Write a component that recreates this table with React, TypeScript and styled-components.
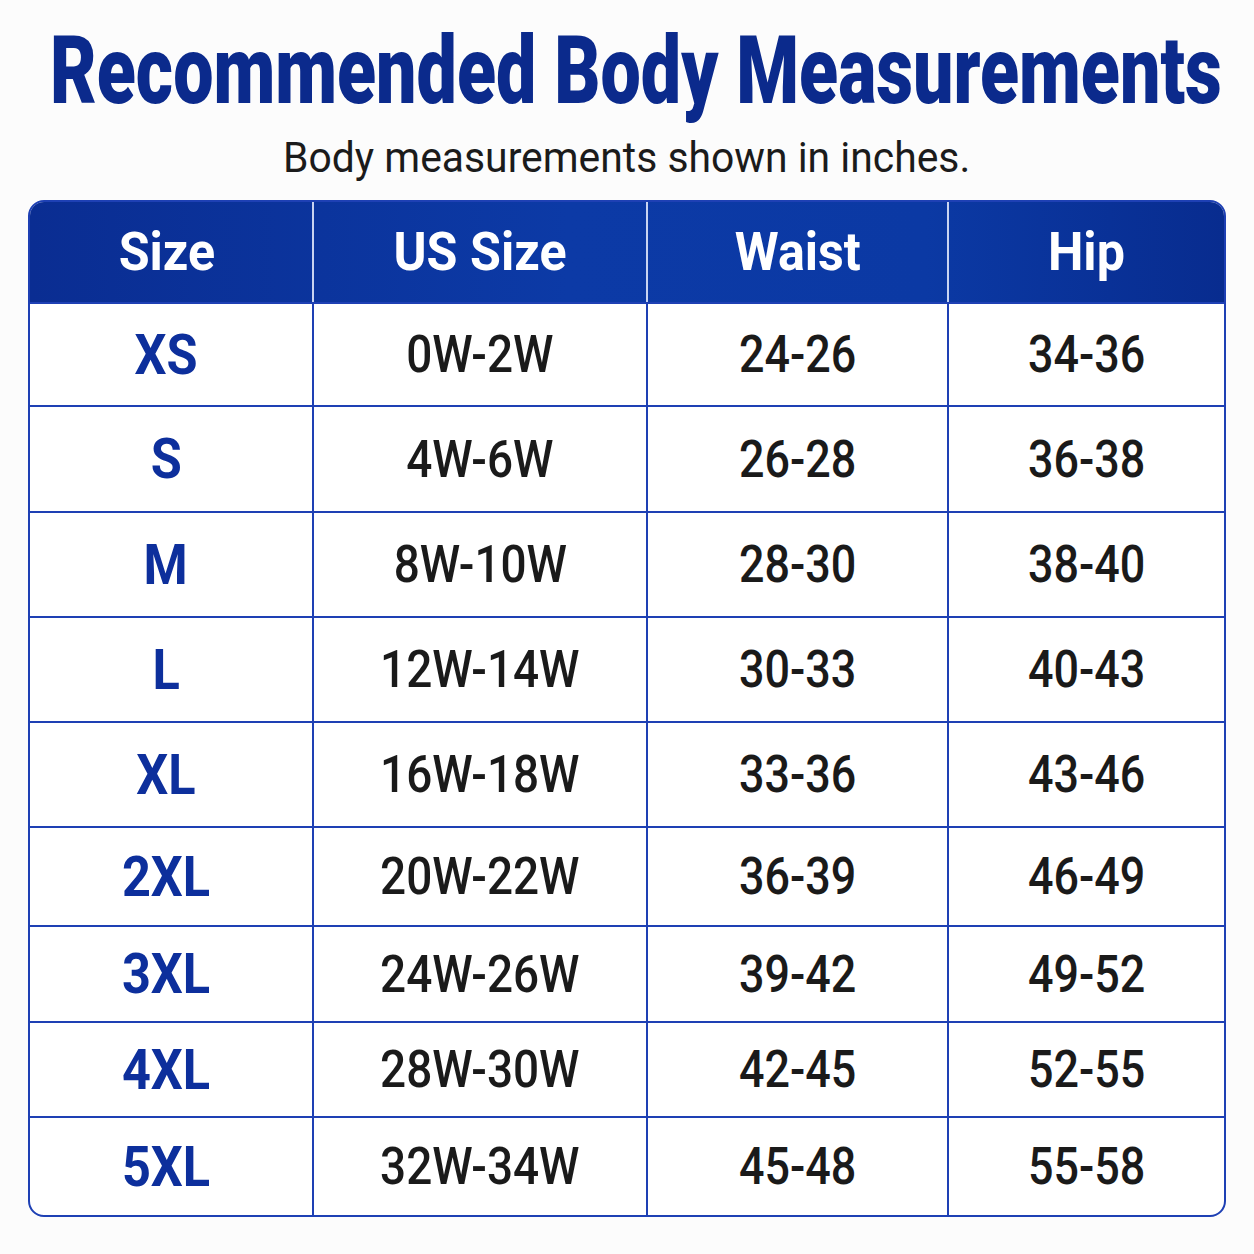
import React from "react";
import styled, { createGlobalStyle } from "styled-components";

const Global = createGlobalStyle`
  html, body { margin: 0; padding: 0; background: #fcfcfc; }
  body { font-family: Roboto, "Liberation Sans", sans-serif; }
`;

const Page = styled.div`
  width: 1254px;
  height: 1254px;
  box-sizing: border-box;
  padding: 21px 28px 0 28px;
  display: flex;
  flex-direction: column;
  align-items: center;
`;

const Title = styled.h1`
  margin: 0 0 0 18px;
  align-self: stretch;
  display: flex;
  justify-content: center;
  font-family: Roboto, sans-serif;
  font-weight: 900;
  font-size: 94px;
  line-height: 100px;
  color: #0b2a8c;
  white-space: nowrap;
`;

const Squeeze = styled.span<{ $s: number }>`
  display: inline-block;
  flex-shrink: 0;
  transform: scaleX(${(p) => p.$s});
  transform-origin: center;
`;

const Subtitle = styled.p`
  margin: 11px 0 0 0;
  font-family: Roboto, sans-serif;
  font-weight: 400;
  font-size: 43px;
  line-height: 50px;
  color: #1b1b1b;
  white-space: nowrap;
`;

const Table = styled.div`
  margin-top: 18px;
  align-self: stretch;
  border: 2px solid #1e40b4;
  border-radius: 16px;
  overflow: hidden;
  background: #fff;
`;

const cols = "282px 334px 301px 1fr";

const HeadRow = styled.div`
  display: grid;
  grid-template-columns: ${cols};
  height: 100px;
  background: linear-gradient(90deg, #0a2d92 0%, #0c3aa6 45%, #0b39a4 75%, #082c8f 100%);
`;

const HeadCell = styled.div<{ $first?: boolean }>`
  display: flex;
  align-items: center;
  justify-content: center;
  border-left: ${(p) => (p.$first ? "none" : "2px solid rgba(235, 240, 255, 0.85)")};
  padding-right: ${(p) => (p.$first ? "8px" : "0")};
  color: #ffffff;
  font-family: Roboto, sans-serif;
  font-weight: 700;
  font-size: 54px;
  padding-bottom: 2px;
`;

const Row = styled.div`
  display: grid;
  grid-template-columns: ${cols};
  border-top: 2px solid #1e40b4;
  box-sizing: border-box;
`;

const Cell = styled.div<{ $first?: boolean }>`
  display: flex;
  align-items: center;
  justify-content: center;
  border-left: ${(p) => (p.$first ? "none" : "2px solid #1e40b4")};
  padding-right: ${(p) => (p.$first ? "10px" : "0")};
  font-family: Roboto, sans-serif;
  font-weight: ${(p) => (p.$first ? 700 : 500)};
  font-size: ${(p) => (p.$first ? "56px" : "51px")};
  color: ${(p) => (p.$first ? "#0d2f9c" : "#1a1a1a")};
`;

const rows: { size: string; us: string; waist: string; hip: string; h: number }[] = [
  { size: "XS", us: "0W-2W", waist: "24-26", hip: "34-36", h: 103 },
  { size: "S", us: "4W-6W", waist: "26-28", hip: "36-38", h: 106 },
  { size: "M", us: "8W-10W", waist: "28-30", hip: "38-40", h: 105 },
  { size: "L", us: "12W-14W", waist: "30-33", hip: "40-43", h: 105 },
  { size: "XL", us: "16W-18W", waist: "33-36", hip: "43-46", h: 105 },
  { size: "2XL", us: "20W-22W", waist: "36-39", hip: "46-49", h: 99 },
  { size: "3XL", us: "24W-26W", waist: "39-42", hip: "49-52", h: 96 },
  { size: "4XL", us: "28W-30W", waist: "42-45", hip: "52-55", h: 95 },
  { size: "5XL", us: "32W-34W", waist: "45-48", hip: "55-58", h: 99 },
];

export default function App() {
  return (
    <>
      <Global />
      <Page>
        <Title>
          <Squeeze $s={0.763}>Recommended Body Measurements</Squeeze>
        </Title>
        <Subtitle>
          <Squeeze $s={0.95}>Body measurements shown in inches.</Squeeze>
        </Subtitle>
        <Table>
          <HeadRow>
            {["Size", "US Size", "Waist", "Hip"].map((h, i) => (
              <HeadCell key={h} $first={i === 0}>
                <Squeeze $s={0.93}>{h}</Squeeze>
              </HeadCell>
            ))}
          </HeadRow>
          {rows.map((r) => (
            <Row key={r.size} style={{ height: r.h }}>
              <Cell $first>
                <Squeeze $s={0.9}>{r.size}</Squeeze>
              </Cell>
              <Cell>
                <Squeeze $s={0.9}>{r.us}</Squeeze>
              </Cell>
              <Cell>
                <Squeeze $s={0.88}>{r.waist}</Squeeze>
              </Cell>
              <Cell>
                <Squeeze $s={0.88}>{r.hip}</Squeeze>
              </Cell>
            </Row>
          ))}
        </Table>
      </Page>
    </>
  );
}
